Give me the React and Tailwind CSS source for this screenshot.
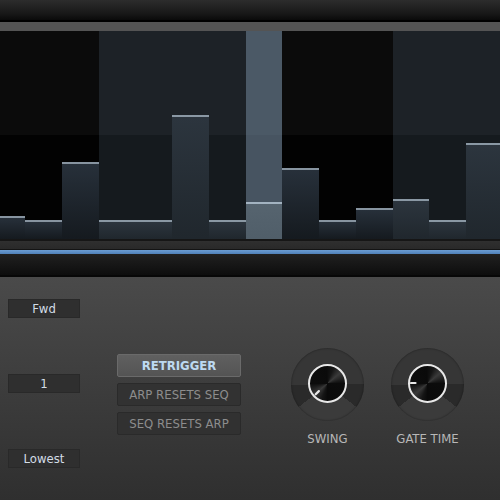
import React from "react";

// step values: top edge of each bar in px from the top of the grid (grid is 208 tall)
const STEPS = [
  { top: 185 }, { top: 189 }, { top: 131 },
  { top: 189 }, { top: 189 }, { top: 84 }, { top: 189 },
  { top: 171, active: true }, { top: 137 }, { top: 189 }, { top: 177 },
  { top: 168 }, { top: 189 }, { top: 112 },
];

const GRID_H = 208;

function Step({ index, top, active }) {
  // groups of four, the first visible group is missing its first column
  const slate = Math.floor((index + 1) / 4) % 2 === 1;
  let colBg = "bg-[linear-gradient(to_bottom,#0b0b0b_50%,#020202_50%)]";
  let barBg = "bg-[linear-gradient(to_bottom,#27303a,#151a1f)] border-[#8794a0]";
  if (slate) {
    colBg = "bg-[linear-gradient(to_bottom,#1d2227_50%,#151a1e_50%)]";
    barBg = "bg-[linear-gradient(to_bottom,#2c353e,#20272d)] border-[#8a98a4]";
  }
  if (active) {
    colBg = "bg-[linear-gradient(to_bottom,#4b5966_50%,#475461_50%)]";
    barBg = "bg-[linear-gradient(to_bottom,#56646f,#505e69)] border-[#a3b3c1]";
  }
  return (
    <div className={`w-[36.75px] shrink-0 h-full flex flex-col justify-end ${colBg}`}>
      <div className={`w-full border-t-2 ${barBg}`} style={{ height: GRID_H - top }} />
    </div>
  );
}

function Field({ children }) {
  return (
    <div className="w-[72px] h-[19px] bg-[#2f2f2f] border border-[#292929] flex items-center justify-center text-[13px] text-[#d3dde6] leading-none">
      {children}
    </div>
  );
}

function Knob({ label, angle }) {
  const rad = (angle * Math.PI) / 180;
  const x1 = 17 + Math.sin(rad) * 16;
  const y1 = 17 - Math.cos(rad) * 16;
  const x2 = 17 + Math.sin(rad) * 11.5;
  const y2 = 17 - Math.cos(rad) * 11.5;
  return (
    <div className="w-[73px] flex flex-col items-center">
      <div className="w-[73px] h-[73px] rounded-full flex items-center justify-center bg-[conic-gradient(#363636_0deg_90deg,#2a2a2a_90deg_128deg,#3b3b3b_128deg_232deg,#2a2a2a_232deg_270deg,#363636_270deg_360deg)] shadow-[inset_0_0_2px_rgba(0,0,0,0.5)]">
        <div className="relative w-[39px] h-[39px] -mt-[3px] rounded-full border-[2.5px] border-[#e8e8e8] bg-[conic-gradient(#0c0c0c_0deg,#151515_20deg,#3a3a3a_50deg,#0c0c0c_90deg,#0a0a0a_180deg,#151515_200deg,#3a3a3a_230deg,#0c0c0c_270deg,#0a0a0a_360deg)]">
          <svg className="absolute inset-0" width="34" height="34" viewBox="0 0 34 34">
            <line x1={x1} y1={y1} x2={x2} y2={y2} stroke="#e8e8e8" strokeWidth="2.2" strokeLinecap="round" />
          </svg>
        </div>
      </div>
      <div className="mt-[10px] text-[13px] leading-4 text-[#b8b8b8] whitespace-nowrap">{label}</div>
    </div>
  );
}

export default function App() {
  return (
    <div
      className="w-[500px] h-[500px] overflow-hidden flex flex-col bg-[#3a3a3a]"
      style={{ fontFamily: '"DejaVu Sans Condensed", "DejaVu Sans", "Liberation Sans", sans-serif', fontStretch: "condensed" }}
    >
      <div className="h-[20px] shrink-0 bg-[linear-gradient(to_bottom,#2c2c2c,#171717_70%,#0a0a0a)]" />
      <div className="h-[2px] shrink-0 bg-black" />
      <div className="h-[9px] shrink-0 bg-[#545454]" />

      <div className="h-[208px] shrink-0 flex overflow-hidden">
        <div className="flex -ml-[11.75px] h-full shrink-0">
          {STEPS.map((s, i) => (
            <Step key={i} index={i} top={s.top} active={s.active} />
          ))}
        </div>
      </div>

      <div className="h-[2px] shrink-0 bg-[#161616]" />
      <div className="h-[8px] shrink-0 bg-[linear-gradient(to_bottom,#2f2f2f,#292929)]" />
      <div className="h-[1px] shrink-0 bg-[#141414]" />
      <div className="h-[4px] shrink-0 bg-[linear-gradient(to_bottom,#6c9dd3,#4f80b8)]" />
      <div className="h-[21px] shrink-0 bg-[linear-gradient(to_bottom,#202020,#0d0d0d)]" />
      <div className="h-[2px] shrink-0 bg-[#070707]" />

      <div className="flex-1 flex bg-[linear-gradient(to_bottom,#4a4a4a,#2f2f2f)]">
        <div className="ml-[8px] pt-[22px] flex flex-col gap-[56px]">
          <Field>Fwd</Field>
          <Field>1</Field>
          <Field>Lowest</Field>
        </div>

        <div className="ml-[37px] pt-[77px] flex flex-col gap-[6px]">
          <button className="w-[124px] h-[23px] rounded-[2px] border border-[#6a6a6a] bg-[linear-gradient(to_bottom,#606060,#545454)] text-[13px] font-bold text-[#bdd9f1] leading-none">
            RETRIGGER
          </button>
          <button className="w-[124px] h-[23px] rounded-[2px] border border-[#2a2a2a] bg-[#323232] text-[13px] text-[#8d8d8d] leading-none">
            ARP RESETS SEQ
          </button>
          <button className="w-[124px] h-[23px] rounded-[2px] border border-[#2a2a2a] bg-[#313131] text-[13px] text-[#8d8d8d] leading-none">
            SEQ RESETS ARP
          </button>
        </div>

        <div className="ml-[50px] pt-[71px] flex gap-[27px]">
          <Knob label="SWING" angle={225} />
          <Knob label="GATE TIME" angle={270} />
        </div>
      </div>
    </div>
  );
}
